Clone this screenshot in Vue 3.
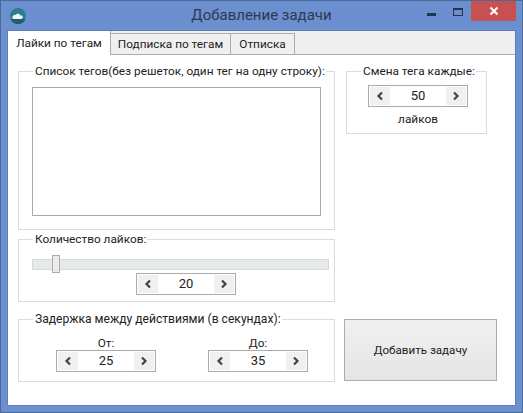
<script setup>
const tabs = [
  { label: 'Лайки по тегам', active: true },
  { label: 'Подписка по тегам', active: false },
  { label: 'Отписка', active: false },
]
</script>

<template>
  <div class="window">
    <header class="titlebar">
      <div class="app-icon">
        <svg width="16" height="16" viewBox="0 0 16 16">
          <circle cx="8" cy="8" r="8" fill="#2a7f96" />
          <path d="M0.6 11h14.8A8 8 0 0 1 8 16 8 8 0 0 1 0.6 11z" fill="#1f5f70" />
          <path d="M3.5 11c-1.400-.1-1.800-2.300-.4-2.700C3.200 6.700 5 6.300 5.800 7c.7-1.600 3.600-1.700 4.200.2 1.800-.3 3 .8 2.700 2.200-.1.900-.8 1.500-1.700 1.600z" fill="#f2f6f8" />
        </svg>
      </div>
      <div class="title">Добавление задачи</div>
      <div class="controls">
        <span class="ctl min"><i></i></span>
        <span class="ctl max"><i></i></span>
        <span class="ctl close">
          <svg width="10" height="10" viewBox="0 0 10 10"><path d="M1.500 1.500l7 7M8.500 1.500l-7 7" stroke="#fff" stroke-width="2" /></svg>
        </span>
      </div>
    </header>

    <main class="client">
      <nav class="tabs">
        <div v-for="t in tabs" :key="t.label" class="tab" :class="{ active: t.active }">{{ t.label }}</div>
      </nav>
      <section class="page">
        <div class="left">
          <fieldset class="group tags">
            <legend>Список тегов(без решеток, один тег на одну строку):</legend>
            <div class="textarea"></div>
          </fieldset>
          <fieldset class="group count">
            <legend>Количество лайков:</legend>
            <div class="slider"><div class="thumb"></div></div>
            <div class="center">
              <div class="spin">
                <span class="arrow"><svg width="8" height="10" viewBox="0 0 8 10"><path d="M6 1.500L2.500 5 6 8.500" fill="none" stroke="#444" stroke-width="2.200" /></svg></span>
                <span class="value">20</span>
                <span class="arrow"><svg width="8" height="10" viewBox="0 0 8 10"><path d="M2 1.500L5.500 5 2 8.500" fill="none" stroke="#444" stroke-width="2.200" /></svg></span>
              </div>
            </div>
          </fieldset>
          <fieldset class="group delay">
            <legend>Задержка между действиями (в секундах):</legend>
            <div class="pair">
              <div class="field">
                <div class="cap">От:</div>
                <div class="spin">
                  <span class="arrow"><svg width="8" height="10" viewBox="0 0 8 10"><path d="M6 1.500L2.500 5 6 8.500" fill="none" stroke="#444" stroke-width="2.200" /></svg></span>
                  <span class="value">25</span>
                  <span class="arrow"><svg width="8" height="10" viewBox="0 0 8 10"><path d="M2 1.500L5.500 5 2 8.500" fill="none" stroke="#444" stroke-width="2.200" /></svg></span>
                </div>
              </div>
              <div class="field">
                <div class="cap">До:</div>
                <div class="spin">
                  <span class="arrow"><svg width="8" height="10" viewBox="0 0 8 10"><path d="M6 1.500L2.500 5 6 8.500" fill="none" stroke="#444" stroke-width="2.200" /></svg></span>
                  <span class="value">35</span>
                  <span class="arrow"><svg width="8" height="10" viewBox="0 0 8 10"><path d="M2 1.500L5.500 5 2 8.500" fill="none" stroke="#444" stroke-width="2.200" /></svg></span>
                </div>
              </div>
            </div>
          </fieldset>
        </div>
        <div class="right">
          <fieldset class="group change">
            <legend>Смена тега каждые:</legend>
            <div class="spin">
              <span class="arrow"><svg width="8" height="10" viewBox="0 0 8 10"><path d="M6 1.500L2.500 5 6 8.500" fill="none" stroke="#444" stroke-width="2.200" /></svg></span>
              <span class="value">50</span>
              <span class="arrow"><svg width="8" height="10" viewBox="0 0 8 10"><path d="M2 1.500L5.500 5 2 8.500" fill="none" stroke="#444" stroke-width="2.200" /></svg></span>
            </div>
            <div class="unit">лайков</div>
          </fieldset>
          <button class="submit">Добавить задачу</button>
        </div>
      </section>
    </main>
  </div>
</template>

<style>
html, body { margin: 0; padding: 0; }
</style>

<style scoped>
.window {
  box-sizing: border-box;
  width: 523px;
  height: 413px;
  background: #6b8fcf;
  border: 1px solid #4a6a9a;
  display: flex;
  flex-direction: column;
  font-family: Roboto, "Noto Sans", sans-serif;
  font-size: 11.8px;
  color: #222;
  overflow: hidden;
}
.titlebar {
  height: 30px;
  flex: none;
  display: grid;
  grid-template-columns: 120px 1fr 120px;
  align-items: center;
}
.app-icon { padding-left: 9px; height: 16px; margin-top: -1px; }
.title {
  text-align: center;
  font-size: 15px;
  color: #2c3a52;
  margin-top: -3px;
}
.controls {
  display: flex;
  justify-content: flex-end;
  align-self: start;
  padding-right: 6px;
}
.ctl { height: 20px; display: flex; align-items: center; justify-content: center; }
.min { width: 9px; margin-right: 17px; }
.min i { display: block; width: 9px; height: 3px; background: #22344f; margin-top: 7px; }
.max { width: 10px; margin-right: 8px; }
.max i { display: block; box-sizing: border-box; width: 10px; height: 8px; border: 1px solid #22344f; border-top-width: 2px; margin-top: 2px; }
.close { width: 45px; background: #c75050; }
.client {
  flex: none;
  margin: 0 7px;
  height: 374px;
  display: flex;
  flex-direction: column;
  background: #fff;
  box-shadow: 0 0 0 1px #5d7eb6;
}
.tabs {
  flex: none;
  height: 24px;
  box-sizing: border-box;
  background: #efefef;
  border-bottom: 1px solid #acacac;
  display: flex;
  padding-top: 2px;
}
.tab {
  box-sizing: border-box;
  height: 22px;
  line-height: 20px;
  background: #f0f0f0;
  border: 1px solid #acacac;
  border-left: 0;
  white-space: nowrap;
  text-align: center;
  width: 120px;
}
.tab:nth-child(3) { width: 64px; }
.tab.active {
  width: 103px;
  height: 24px;
  margin-top: -2px;
  background: #fff;
  border: 0;
  border-right: 1px solid #acacac;
  line-height: 24px;
}
.page {
  flex: 1;
  display: flex;
  padding: 8px 0 0 10px;
}
.left { width: 317px; flex: none; display: flex; flex-direction: column; }
.right {
  flex: 1;
  padding-left: 9px;
  display: flex;
  flex-direction: column;
  align-items: flex-start;
}
.group {
  box-sizing: border-box;
  margin: 0;
  min-width: 0;
  border: 1px solid #dcdcdc;
  padding: 0 13px;
}
.group legend {
  padding: 0 1px 0 2px;
  margin-left: 1px;
  line-height: 16px;
  white-space: nowrap;
}
.tags { height: 167px; padding-top: 8px; }
.textarea {
  box-sizing: border-box;
  height: 129px;
  width: 289px;
  border: 1px solid #a9a9a9;
  background: #fff;
}
.count { height: 71px; margin-top: 1px; padding-top: 12px; }
.slider {
  height: 11px;
  width: 297px;
  background: #e7eaea;
  border: 1px solid #d8d8d8;
  box-sizing: border-box;
  position: relative;
}
.thumb {
  position: absolute;
  left: 19px;
  top: -5px;
  width: 8px;
  height: 18px;
  box-sizing: border-box;
  background: #ececec;
  border: 1px solid #acacac;
}
.center { display: flex; padding: 3px 0 0 104px; }
.spin {
  box-sizing: border-box;
  width: 100px;
  height: 22px;
  border: 1px solid #ababab;
  display: flex;
  align-items: stretch;
  background: #fff;
  flex: none;
}
.arrow {
  width: 20px;
  flex: none;
  background: #f0f0f0;
  margin: 1px;
  display: flex;
  align-items: center;
  justify-content: center;
}
.value { flex: 1; text-align: center; line-height: 20px; font-size: 13px; color: #222; }
.delay { height: 71px; margin-top: 9px; padding-top: 8px; }
.delay legend { font-size: 12.1px; }
.pair { display: flex; padding-left: 24px; gap: 52px; }
.field { display: flex; flex-direction: column; align-items: center; }
.cap { line-height: 16px; height: 15px; }
.change {
  width: 141px;
  height: 71px;
  margin-left: 2px;
  padding: 6px 0 0 21px;
}
.change legend { margin-left: -7px; }
.unit { width: 100px; text-align: center; line-height: 16px; margin-top: 4px; }
.submit {
  box-sizing: border-box;
  margin-top: auto;
  margin-bottom: 24px;
  width: 153px;
  height: 62px;
  border: 1px solid #acacac;
  background: linear-gradient(#f0f0f0, #e5e5e5);
  font-family: inherit;
  font-size: 11.6px;
  color: #222;
  padding: 0;
}
</style>
